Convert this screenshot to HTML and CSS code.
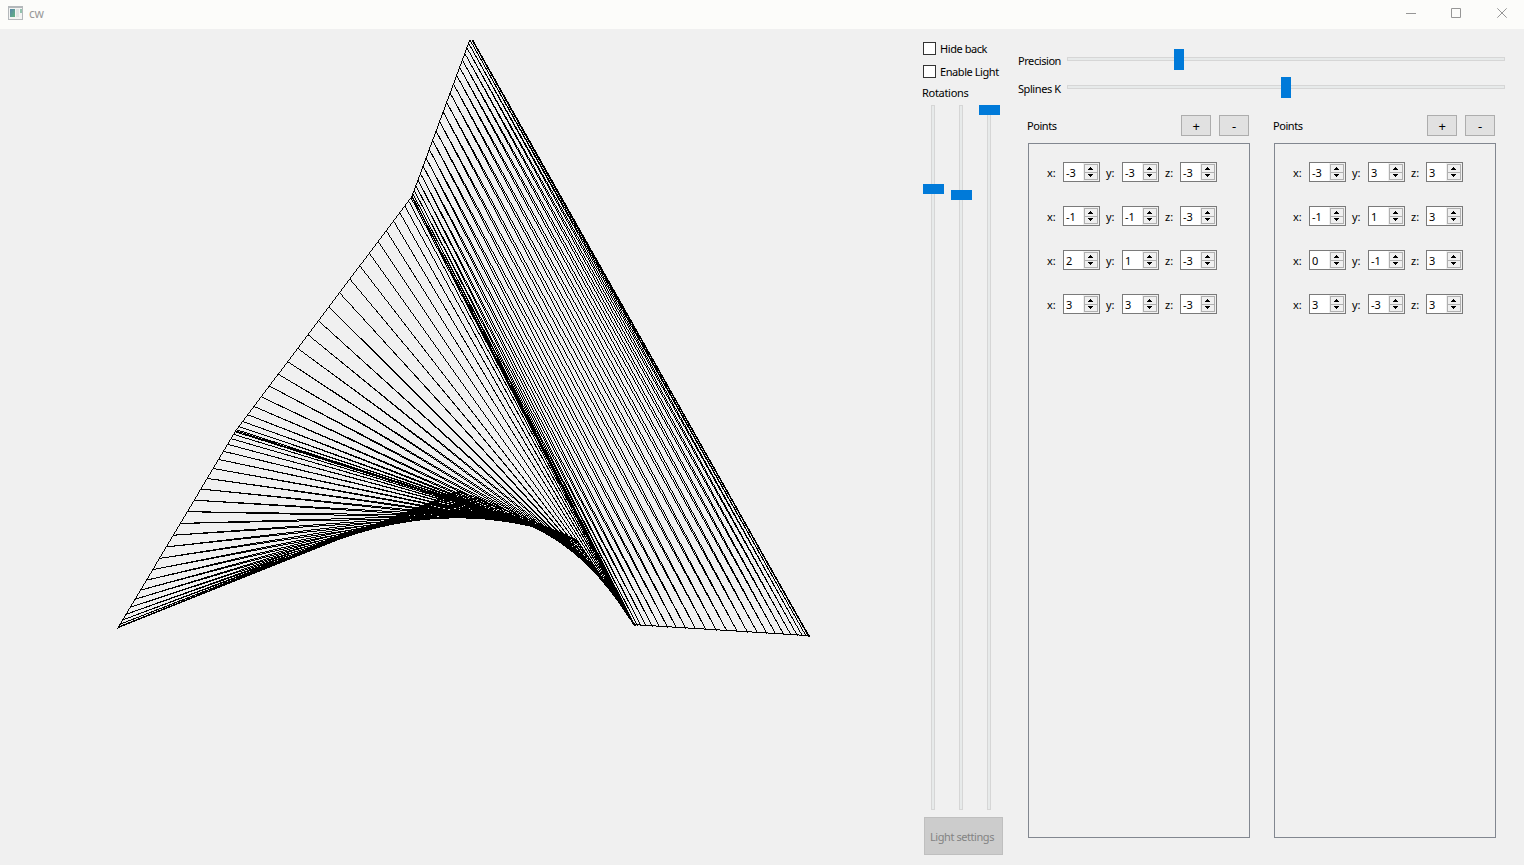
FILE: index.html
```html
<!DOCTYPE html>
<html lang="en">
<head>
<meta charset="utf-8">
<title>cw</title>
<link rel="stylesheet" href="styles.css">
</head>
<body>
<header class="titlebar">
  <svg class="app-icon" width="15" height="14" viewBox="0 0 15 14" shape-rendering="crispEdges">
    <defs><linearGradient id="g" x1="0" y1="0" x2="1" y2="1"><stop offset="0" stop-color="#5585a8"/><stop offset="1" stop-color="#62b380"/></linearGradient></defs>
    <rect width="15" height="14" fill="#b4b8bb"/>
    <rect x="1" y="2" width="13" height="11" fill="#f3f4f3"/>
    <rect x="2" y="3" width="5" height="8" fill="url(#g)"/>
    <rect x="8" y="3" width="3" height="8" fill="#dfe3e3"/>
    <rect x="12" y="3" width="2" height="4" fill="#93c2ae"/>
  </svg>
  <span class="title">cw</span>
  <svg class="window-buttons" width="102" height="11" viewBox="0 0 102 11" fill="none" stroke="#969696">
    <path d="M0 5.500H10M45.500 .5h9v9h-9z"/>
    <path d="M91.300 .3l9.400 9.400M100.700 .3l-9.400 9.400"/>
  </svg>
</header>
<main class="content">
  <canvas class="view" id="view" width="906" height="816"></canvas>
  <section class="side">
    <label class="check"><i class="box"></i><span>Hide back</span></label>
    <label class="check"><i class="box"></i><span>Enable Light</span></label>
    <div class="rot-title">Rotations</div>
    <div class="rotations">
      <div class="vslider"><i class="vhandle h1"></i></div>
      <div class="vslider"><i class="vhandle h2"></i></div>
      <div class="vslider"><i class="vhandle h3"></i></div>
    </div>
    <div class="light"><span>Light settings</span></div>
  </section>
  <section class="panel">
    <div class="hrow"><span class="hlabel">Precision</span><div class="hslider"><i class="hhandle p1"></i></div></div>
    <div class="hrow"><span class="hlabel">Splines K</span><div class="hslider"><i class="hhandle p2"></i></div></div>
    <div class="groups" id="groups"></div>
  </section>
</main>
<script src="app.js"></script>
</body>
</html>
```
FILE: styles.css
```css
* { box-sizing: border-box; }
body {
  margin: 0;
  width: 1524px;
  height: 865px;
  overflow: hidden;
  background: #f0f0f0;
  color: #000;
  font: 11px/14px "Noto Sans", "Open Sans", sans-serif;
  letter-spacing: -0.43px;
}
.titlebar {
  display: flex;
  align-items: flex-start;
  height: 29px;
  padding: 6px 16px 0 8px;
  background: #fcfcfa;
}
.title { margin: 1px 0 0 6px; font-size: 12px; color: #999; letter-spacing: -0.2px; }
.window-buttons { margin: 2px 0 0 auto; }
.content { display: flex; height: 836px; }
.view { flex: none; margin: 11px 0 0 9px; width: 906px; height: 816px; }
.side { flex: none; width: 96px; padding: 13px 0 0 8px; }
.check { display: flex; height: 23px; gap: 4px; }
.check span { white-space: nowrap; }
.box { width: 13px; height: 13px; border: 1px solid #333; background: #fff; }
.rot-title { margin: -2px 0 0 -1px; height: 19px; letter-spacing: -0.3px; }
.rotations { display: flex; height: 705px; gap: 24px; padding-left: 8px; }
.vslider { position: relative; width: 4px; border: 1px solid #d6d6d6; background: #e7eaea; }
.vhandle { position: absolute; left: -9px; width: 21px; height: 10px; background: #007ad9; }
.h1 { top: 78px; }
.h2 { top: 84px; }
.h3 { top: -1px; }
.light {
  display: flex;
  align-items: center;
  justify-content: center;
  width: 79px;
  height: 38px;
  margin: 7px 0 0 1px;
  border: 1px solid #bfbfbf;
  background: #ccc;
  color: #838383;
}
.light span { margin: 2px 3px 0 0; white-space: nowrap; }
.panel { width: 494px; padding: 16px 0 0 7px; }
.hrow { display: flex; height: 28px; }
.hlabel { width: 49px; padding-top: 9px; white-space: nowrap; }
.hslider { position: relative; width: 438px; height: 4px; margin-top: 12px; border: 1px solid #d6d6d6; background: #e7eaea; }
.hhandle { position: absolute; top: -9px; width: 10px; height: 21px; background: #007ad9; }
.p1 { left: 106px; }
.p2 { left: 213px; }
.groups { display: flex; gap: 24px; padding: 14px 0 0 10px; }
.group { width: 222px; }
.head { display: flex; gap: 8px; height: 28px; }
.head .name { flex: 1; margin: 4px 0 0 -1px; }
.btn { width: 30px; height: 21px; border: 1px solid #adadad; background: #e1e1e1; text-align: center; font-size: 13px; line-height: 20px; }
.btn:last-child { margin-right: 1px; }
.frame { height: 695px; border: 1px solid #828790; padding: 18px 0 0 18px; }
.row { display: flex; height: 44px; }
.axis { width: 16px; padding-top: 4px; letter-spacing: 0; }
.axis-z { width: 15px; }
.spin {
  display: flex;
  width: 37px;
  height: 20px;
  margin-right: 6px;
  padding: 1px 1px 1px 2px;
  border: 1px solid #7a7a7a;
  background: #fff;
}
.value { width: 18px; padding-top: 2px; letter-spacing: 0; }
.arrows { width: 14px; height: 16px; outline: 1px solid #f0f0f0; }
```
FILE: app.js
```js
const groups = [
  [[-3, -3, -3], [-1, -1, -3], [2, 1, -3], [3, 3, -3]],
  [[-3, 3, 3], [-1, 1, 3], [0, -1, 3], [3, -3, 3]]
];

const arrows = `<svg class="arrows" viewBox="0 0 14 16" shape-rendering="crispEdges">
  <rect width="14" height="16" fill="#b0b0b0"/>
  <path fill="#f0f0f0" d="M1 1h12v7H1z M1 9h12v6H1z"/>
  <path fill="#000" d="M6 3h1v1h1v1h1v1H4V5h1V4h1z M4 10h5v1H8v1H7v1H6v-1H5v-1H4z"/>
</svg>`;

document.getElementById('groups').innerHTML = groups.map(points => `
  <div class="group">
    <div class="head"><span class="name">Points</span><div class="btn">+</div><div class="btn">-</div></div>
    <div class="frame">${points.map(p => `<div class="row">${p.map((v, i) =>
      `<span class="axis axis-${'xyz'[i]}">${'xyz'[i]}:</span><div class="spin"><span class="value">${v}</span>${arrows}</div>`
    ).join('')}</div>`).join('')}</div>
  </div>`).join('');

// Screen-space basis of the rotated model, relative to the window.
const origin = [118, 627.8];
const ex = [58.55, -37.2], ey = [0.27, -61.3], ez = [56.6, 38.5];
const left = 9, top0 = 40;
const project = ([x, y, z]) => [0, 1].map(i =>
  origin[i] + (x + 3) * ex[i] + (y + 3) * ey[i] + (z + 3) * ez[i] - (i ? top0 : left));

const STEPS = 25;
function spline(points) {
  const p = points.map(project), out = [];
  for (let s = 0; s < p.length - 1; s++) {
    for (let k = s ? 1 : 0; k <= STEPS; k++) {
      const t = k / STEPS, w = t * t * (3 - 2 * t);
      out.push([0, 1].map(i => p[s][i] + (p[s + 1][i] - p[s][i]) * w));
    }
  }
  return out;
}

const ctx = document.getElementById('view').getContext('2d');
function line(a, b) {
  const m = Math.abs(b[0] - a[0]) >= Math.abs(b[1] - a[1]) ? 0 : 1;
  if (a[m] > b[m]) [a, b] = [b, a];
  const slope = (b[1 - m] - a[1 - m]) / (b[m] - a[m] || 1);
  for (let u = Math.round(a[m]); u <= Math.round(b[m]); u++) {
    const v = Math.floor(a[1 - m] + (u + 0.5 - a[m]) * slope);
    if (m) ctx.fillRect(v, u, 1, 1); else ctx.fillRect(u, v, 1, 1);
  }
}

const a = spline(groups[0]), b = spline(groups[1]);
for (let k = 0; k < a.length; k++) {
  line(a[k], b[k]);
  if (k + 1 < a.length) {
    line(a[k], a[k + 1]);
    line(b[k], b[k + 1]);
    line(a[k + 1], b[k]);
  }
}
```
